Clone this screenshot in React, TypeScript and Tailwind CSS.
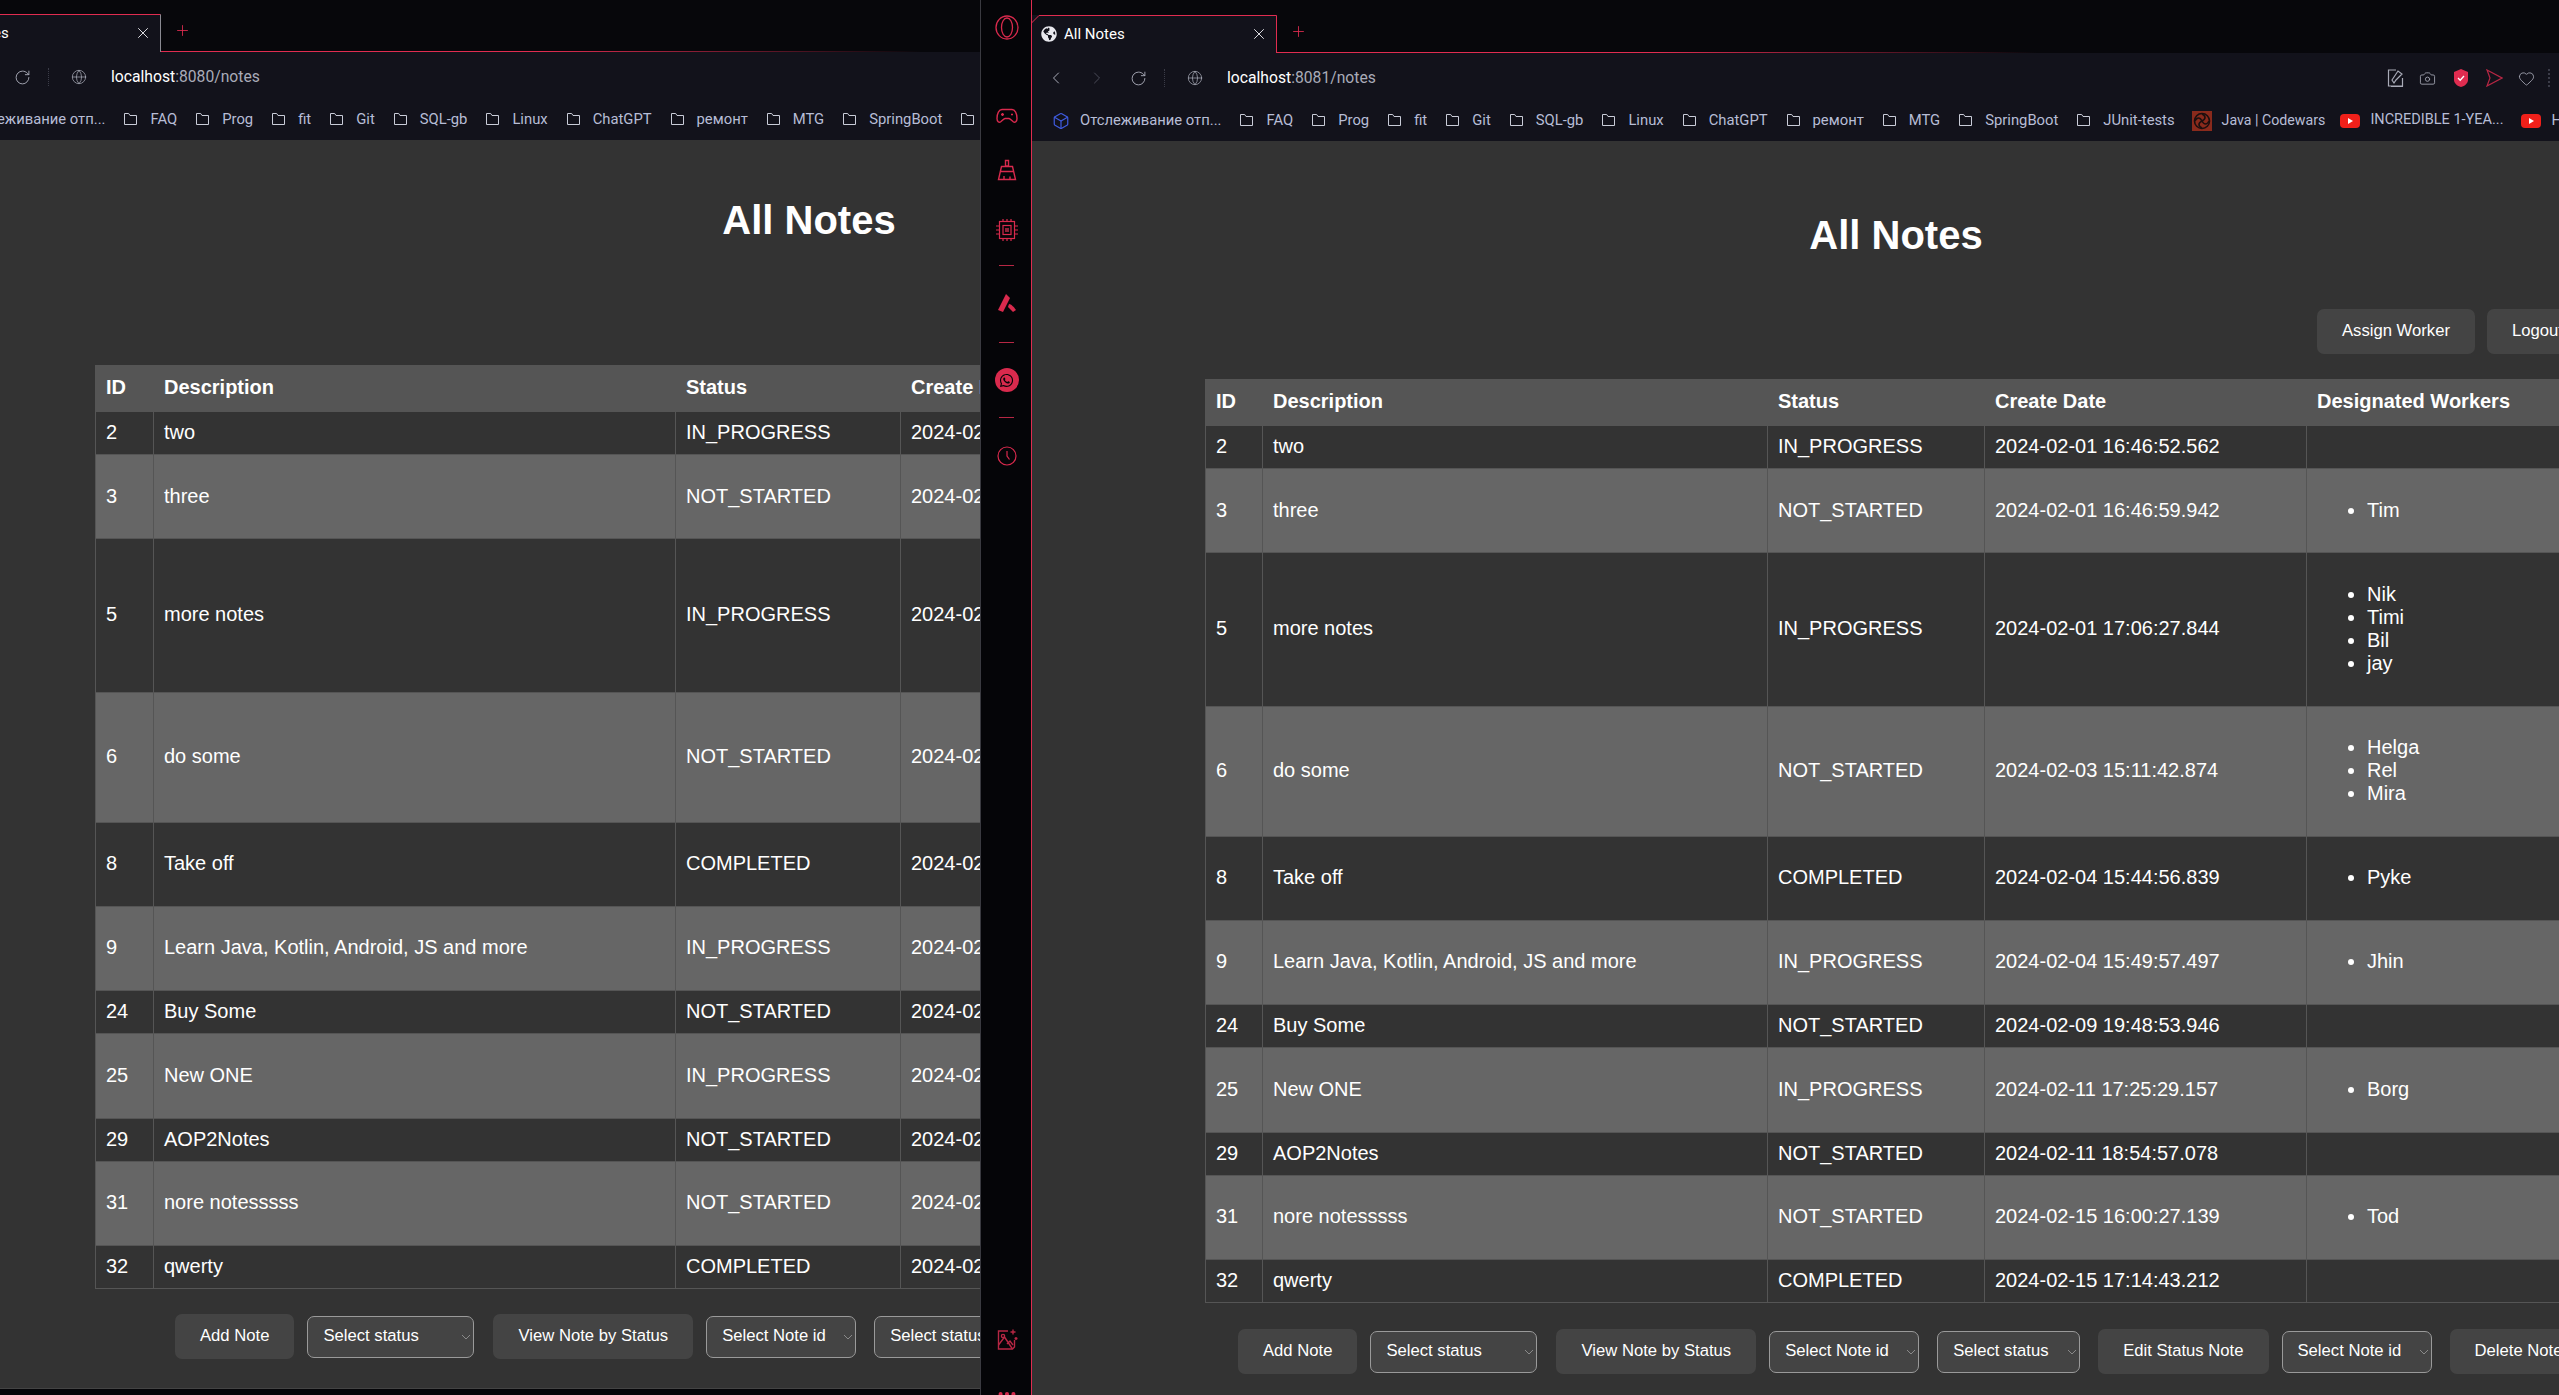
import React from "react";
import { ChevronLeft, ChevronRight, RotateCw, Globe, X, Plus, Camera, Heart, Box, MoreHorizontal } from "lucide-react";
import { FaGlobeAmericas, FaWhatsapp } from "react-icons/fa";

const RED = "#d92a4d";

type Row = { id: number; d: string; s: string; c: string; w: string[] };
const rows: Row[] = [
  { id: 2, d: "two", s: "IN_PROGRESS", c: "2024-02-01 16:46:52.562", w: [] },
  { id: 3, d: "three", s: "NOT_STARTED", c: "2024-02-01 16:46:59.942", w: ["Tim"] },
  { id: 5, d: "more notes", s: "IN_PROGRESS", c: "2024-02-01 17:06:27.844", w: ["Nik", "Timi", "Bil", "jay"] },
  { id: 6, d: "do some", s: "NOT_STARTED", c: "2024-02-03 15:11:42.874", w: ["Helga", "Rel", "Mira"] },
  { id: 8, d: "Take off", s: "COMPLETED", c: "2024-02-04 15:44:56.839", w: ["Pyke"] },
  { id: 9, d: "Learn Java, Kotlin, Android, JS and more", s: "IN_PROGRESS", c: "2024-02-04 15:49:57.497", w: ["Jhin"] },
  { id: 24, d: "Buy Some", s: "NOT_STARTED", c: "2024-02-09 19:48:53.946", w: [] },
  { id: 25, d: "New ONE", s: "IN_PROGRESS", c: "2024-02-11 17:25:29.157", w: ["Borg"] },
  { id: 29, d: "AOP2Notes", s: "NOT_STARTED", c: "2024-02-11 18:54:57.078", w: [] },
  { id: 31, d: "nore notesssss", s: "NOT_STARTED", c: "2024-02-15 16:00:27.139", w: ["Tod"] },
  { id: 32, d: "qwerty", s: "COMPLETED", c: "2024-02-15 17:14:43.212", w: [] },
];

function Folder() {
  return (
    <svg width="15" height="14" viewBox="0 0 15 14" fill="none" stroke="#c9ccd8" strokeWidth="1" className="shrink-0">
      <path d="M1.5 1.5h4.2l1.3 2h6.5v9h-12z" />
    </svg>
  );
}

function Yt() {
  return (
    <svg width="20" height="16" viewBox="0 0 20 16" className="shrink-0">
      <rect x="0" y="1" width="20" height="14" rx="4" fill="#f0201a" />
      <path d="M8 5l5 3-5 3z" fill="#fff" />
    </svg>
  );
}

function Codewars() {
  return (
    <svg width="20" height="20" viewBox="0 0 20 20" className="shrink-0">
      <rect width="20" height="20" fill="#8a2a1c" />
      <circle cx="10" cy="10" r="7.5" fill="none" stroke="#1b0f0f" strokeWidth="1.6" />
      <path d="M10 3c4 2 4 5 0 7s-4 5 0 7M3 10c2-4 5-4 7 0s5 4 7 0" fill="none" stroke="#1b0f0f" strokeWidth="1.6" />
    </svg>
  );
}

const marks = ["FAQ", "Prog", "fit", "Git", "SQL-gb", "Linux", "ChatGPT", "ремонт", "MTG", "SpringBoot", "JUnit-tests"];

function Chrome({ port, dim }: { port: string; dim: boolean }) {
  return (
    <div className="font-['Roboto',sans-serif]">
      {/* tab strip */}
      <div className="relative h-[53px] bg-[#07070b]">
        <div className="absolute bottom-0 left-[245px] h-px w-[760px] bg-gradient-to-r from-[#e02c50] via-[#e02c50] to-transparent" />
        <div className="absolute left-[-1px] top-[15px] flex h-[38px] w-[246px] items-center bg-[#12121b]">
          <svg className="absolute inset-0" width="246" height="38" viewBox="0 0 246 38" fill="none" stroke="#e02c50">
            <path d="M0.5 38V8L8 .5H245.5" />
            <path d="M245.5 .5V38" stroke={dim ? "#8a8a92" : "#e02c50"} />
          </svg>
          <FaGlobeAmericas size={16} color="#e8e8ee" className="ml-[10px] shrink-0" />
          <span className="ml-[7px] text-[15px] leading-none text-white">All Notes</span>
          <X size={18} strokeWidth={1.2} color="#f2f2f6" className="ml-auto mr-[9px]" />
        </div>
        <Plus size={17} strokeWidth={1.2} color="#e02c50" className="absolute left-[258px] top-[23px]" />
      </div>
      {/* toolbar */}
      <div className="flex h-[47px] items-center bg-[#12121b] pr-[9px] pt-[3px] text-[#a9abb8]">
        <ChevronLeft size={20} strokeWidth={1.2} className="ml-[14px] shrink-0" />
        <ChevronRight size={20} strokeWidth={1.2} color="#4a4b58" className="ml-[21px] shrink-0" />
        <RotateCw size={17} strokeWidth={1.3} className="ml-[23px] shrink-0" />
        <div className="ml-[17px] h-[18px] w-0 shrink-0 border-l border-dotted border-[#3b3c48]" />
        <Globe size={16} strokeWidth={1.1} className="ml-[22px] shrink-0" />
        <span className="ml-[24px] text-[15.7px] leading-none">
          <span className="text-white">localhost</span>:{port}/notes
        </span>
        <div className="ml-auto flex items-center gap-[15px]">
          <svg width="17" height="20" viewBox="0 0 17 20" fill="none" stroke="#a9abb8" strokeWidth="1.2">
            <path d="M9 2H1.5v16h14v-8M5 12l6-9 4 3-6 6-2 3zM4 18.5h12" />
          </svg>
          <Camera size={17} strokeWidth={1.2} />
          <svg width="16" height="20" viewBox="0 0 16 20" className="mx-[2px]">
            <path d="M8 1l7 3v8c0 3-3 6-7 7-4-1-7-4-7-7V4z" fill="#e02c50" />
            <path d="M5 10l2.2 2.2L11 8" fill="none" stroke="#fff" strokeWidth="1.3" />
          </svg>
          <svg width="17" height="18" viewBox="0 0 17 18" fill="none" stroke="#b72744" strokeWidth="1.2">
            <path d="M1 1l15 8L1 17l3-8z" />
          </svg>
          <Heart size={17} strokeWidth={1.2} />
          <div className="ml-[-2px] h-[18px] w-0 border-l-2 border-dotted border-[#3b3c48]" />
        </div>
      </div>
      {/* bookmarks */}
      <div className="flex h-[41px] items-center gap-[18px] overflow-hidden whitespace-nowrap bg-[#12121b] pl-[20px] text-[14.8px] leading-none text-[#b7bdd6]">
        <div className="flex shrink-0 items-center gap-[10px]">
          <Box size={18} strokeWidth={1.6} color="#3f5be0" />
          <span>Отслеживание отп...</span>
        </div>
        {marks.map((t) => (
          <div key={t} className="flex shrink-0 items-center gap-[12px]">
            <Folder />
            <span>{t}</span>
          </div>
        ))}
        <div className="ml-[-1px] flex shrink-0 items-center gap-[10px]">
          <Codewars />
          <span className="text-[14.2px]">Java | Codewars</span>
        </div>
        <div className="ml-[-3px] flex shrink-0 items-center gap-[10px]">
          <Yt />
          <span className="text-[14.5px]">INCREDIBLE 1-YEA...</span>
        </div>
        <div className="flex shrink-0 items-center gap-[10px]">
          <Yt />
          <span>H</span>
        </div>
      </div>
    </div>
  );
}

const btn = "h-[45px] shrink-0 rounded-[7px] bg-[#444] px-[25px] text-[16.67px] leading-none text-white";

function Sel({ label, className }: { label: string; className: string }) {
  return (
    <div className={"relative shrink-0 " + className}>
      <select
        defaultValue={label}
        className="block h-[42px] w-full appearance-none rounded-[7px] border border-[#9a9a9a] bg-[#444] pl-[15px] text-[16.67px] leading-none text-white"
      >
        <option>{label}</option>
      </select>
      <svg width="10" height="6" viewBox="0 0 10 6" fill="none" stroke="#8a8a8a" className="absolute right-[3px] top-[18px]">
        <path d="M1 1l4 4 4-4" />
      </svg>
    </div>
  );
}

function NotesTable({ wide, className }: { wide: boolean; className: string }) {
  const cell = "border border-[#555] px-[10px] pb-[10.2px] pt-[9px] text-left align-middle";
  const head = "border border-[#555] bg-[#555] px-[10px] pb-[12px] pt-[10px] text-left font-bold";
  return (
    <table className={"table-fixed border-collapse text-[20px] leading-[23px] text-white " + className}>
      <colgroup>
        <col className={wide ? "w-[57px]" : "w-[58px]"} />
        <col className={wide ? "w-[505px]" : "w-[522px]"} />
        <col className={wide ? "w-[217px]" : "w-[225px]"} />
        <col className={wide ? "w-[322px]" : "w-[323px]"} />
        <col className="w-[300px]" />
      </colgroup>
      <thead>
        <tr>
          <th className={head}>ID</th>
          <th className={head}>Description</th>
          <th className={head}>Status</th>
          <th className={head + " whitespace-nowrap"}>Create Date</th>
          <th className={head + " whitespace-nowrap"}>Designated Workers</th>
        </tr>
      </thead>
      <tbody>
        {rows.map((r, i) => (
          <tr key={r.id} className={i % 2 === 1 ? "bg-[#666]" : ""}>
            <td className={cell}>{r.id}</td>
            <td className={cell}>{r.d}</td>
            <td className={cell}>{r.s}</td>
            <td className={cell + " whitespace-nowrap"}>{r.c}</td>
            <td className={cell}>
              {r.w.length > 0 && (
                <ul className="my-[20.5px] list-disc pl-[50px]">
                  {r.w.map((w) => (
                    <li key={w}>{w}</li>
                  ))}
                </ul>
              )}
            </td>
          </tr>
        ))}
      </tbody>
    </table>
  );
}

function ActionRow({ className }: { className: string }) {
  return (
    <div className={"flex items-center " + className}>
      <button className={btn}>Add Note</button>
      <Sel label="Select status" className="ml-[13px] w-[167px]" />
      <button className={btn + " ml-[19px]"}>View Note by Status</button>
      <Sel label="Select Note id" className="ml-[13px] w-[150px]" />
      <Sel label="Select status" className="ml-[18px] w-[143px]" />
      <button className={btn + " ml-[18px]"}>Edit Status Note</button>
      <Sel label="Select Note id" className="ml-[13px] w-[150px]" />
      <button className={btn + " ml-[18px]"}>Delete Note</button>
    </div>
  );
}

function Sidebar() {
  return (
    <div className="flex h-[1395px] w-[51px] shrink-0 flex-col items-center overflow-hidden border-l border-[#3a3a40] bg-[#050508] pl-[1px] pt-[15px]">
      <svg width="24" height="25" viewBox="0 0 24 25" fill="none" stroke={RED} strokeWidth="1.3" className="shrink-0">
        <ellipse cx="12" cy="12.5" rx="11" ry="11.5" />
        <ellipse cx="12" cy="12.5" rx="5.5" ry="9.5" />
      </svg>
      <svg width="22" height="16" viewBox="0 0 22 16" fill="none" stroke={RED} strokeWidth="1.4" className="mt-[68px] shrink-0">
        <path d="M6 1.5h10c3 0 5 4 5 9 0 3-2 4.500-3.500 3.500S14 10.500 13 10.500H9C8 10.500 6 13 4.500 14S1 13.500 1 10.500c0-5 2-9 5-9z" />
        <path d="M5 6.500h3M6.500 5v3M15 6.500h2" />
      </svg>
      <svg width="20" height="22" viewBox="0 0 20 22" fill="none" stroke={RED} strokeWidth="1.4" className="mt-[35px] shrink-0">
        <path d="M8.500 1.500h3V7h-3zM4.500 7.500h11l3 13h-17zM3.500 12.500h13M7 20.500v-3.500M13 20.500v-3" />
      </svg>
      <svg width="24" height="24" viewBox="0 0 24 24" fill="none" stroke={RED} strokeWidth="1.2" className="mt-[37px] shrink-0">
        <rect x="4.500" y="3.500" width="15" height="17" />
        <rect x="8" y="7.500" width="8" height="9" />
        <path d="M8 1v2.500M12 1v2.500M16 1v2.500M8 20.500V23M12 20.500V23M16 20.500V23M1 8h3.500M1 12h3.500M1 16h3.500M19.500 8H23M19.500 12H23M19.500 16H23" />
        <rect x="10" y="10" width="4" height="4" fill="#8e2238" stroke="none" />
      </svg>
      <div className="mt-[23px] h-px w-[15px] shrink-0 bg-[#b72744]" />
      <svg width="20" height="20" viewBox="0 0 20 20" className="mt-[27px] shrink-0">
        <path d="M9 1l4 4L6 19 1 17z" fill={RED} />
        <path d="M12 11c2 0 5 3 7 6l-3 2-5-5z" fill={RED} />
      </svg>
      <div className="mt-[29px] h-px w-[15px] shrink-0 bg-[#b72744]" />
      <div className="mt-[25px] flex h-[24px] w-[24px] shrink-0 items-center justify-center rounded-full bg-[#d92a4d]">
        <FaWhatsapp size={15} color="#050508" />
      </div>
      <div className="mt-[25px] h-px w-[15px] shrink-0 bg-[#b72744]" />
      <svg width="20" height="20" viewBox="0 0 20 20" fill="none" stroke={RED} strokeWidth="1.2" className="mt-[28px] shrink-0">
        <circle cx="10" cy="10" r="9" />
        <path d="M10 5v5l2.500 3.500" />
      </svg>
      <svg width="24" height="24" viewBox="0 0 24 24" fill="none" stroke="#b72744" strokeWidth="1.4" className="mt-[862px] shrink-0">
        <path d="M13 3H3.500v18h14l2-2v-7" />
        <path d="M3.500 17l6-8 8 12M12 16l3-3 3 4" />
        <circle cx="8" cy="8" r="1.600" />
        <path d="M18 1.500v5M15.500 4h5M21 9v3M19.500 10.500h3" />
      </svg>
      <MoreHorizontal size={22} strokeWidth={2.4} color={RED} className="mt-[31px] shrink-0" />
    </div>
  );
}

export default function App() {
  return (
    <div className="flex h-[1395px] w-[2559px] overflow-hidden bg-[#050508] font-['Liberation_Sans',Arial,sans-serif]">
      {/* left browser window */}
      <div className="h-[1389px] w-[980px] shrink-0 overflow-hidden border-b border-[#444]">
        <div className="ml-[-85px] mt-[-1px] w-[1528px] border-l border-transparent">
          <Chrome port="8080" dim />
          <div className="h-[1250px] w-[1786px] bg-[#333]">
            <h1 className="pt-[57px] text-center text-[40px] font-bold leading-[46px] text-white">All Notes</h1>
            <NotesTable wide={false} className="ml-[179px] mt-[122px] w-[1428px]" />
            <ActionRow className="ml-[259px] mt-[25px]" />
          </div>
        </div>
      </div>
      <Sidebar />
      {/* right browser window */}
      <div className="h-[1395px] w-[1528px] shrink-0 overflow-hidden border-l border-[#e02c50]">
        <Chrome port="8081" dim={false} />
        <div className="h-[1254px] w-[1728px] bg-[#333]">
          <h1 className="pt-[71px] text-center text-[40px] font-bold leading-[46px] text-white">All Notes</h1>
          <div className="ml-[1285px] mt-[51px] flex gap-[12px]">
            <button className={btn}>Assign Worker</button>
            <button className={btn}>Logout</button>
          </div>
          <NotesTable wide className="ml-[173px] mt-[25px] w-[1401px]" />
          <ActionRow className="ml-[206px] mt-[26px]" />
        </div>
      </div>
    </div>
  );
}
